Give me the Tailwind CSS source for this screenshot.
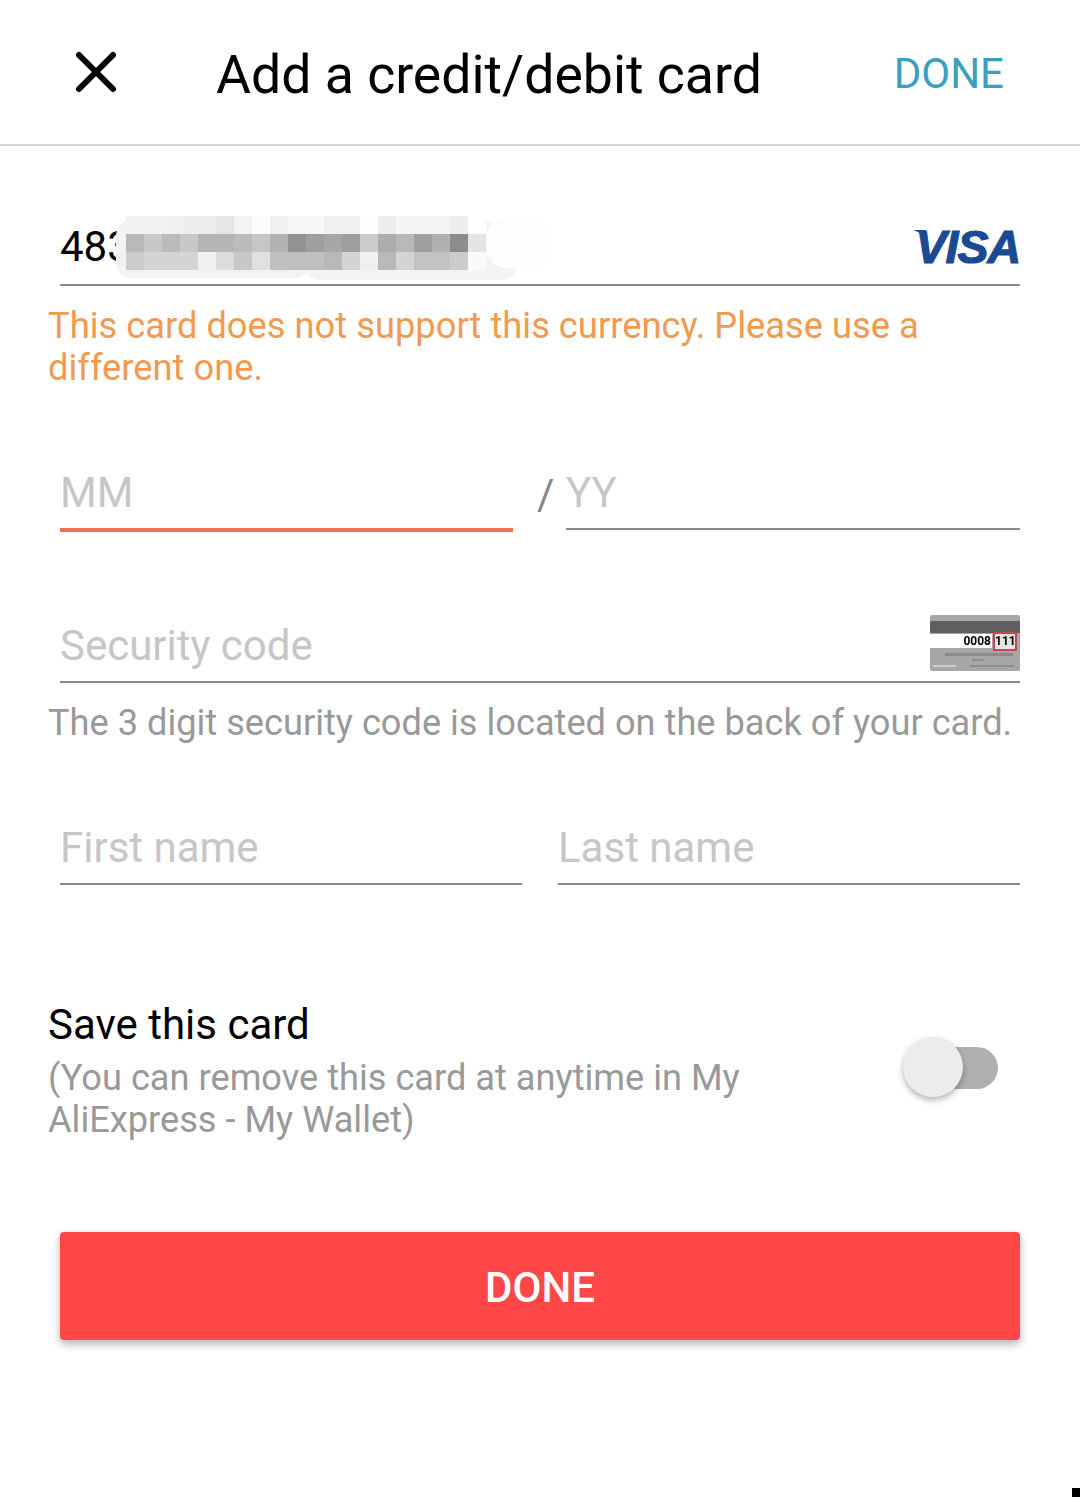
<!DOCTYPE html>
<html lang="en">
<head>
<meta charset="utf-8">
<script src="https://cdn.jsdelivr.net/npm/@tailwindcss/browser@4"></script>
</head>
<body class="bg-white">
<div class="relative w-[1080px] h-[1497px] overflow-hidden bg-white font-[Roboto,sans-serif]">
  <header class="flex items-center h-[146px] border-b-2 border-[#d4d4d4] pl-[72px] pr-[76px]">
    <svg class="w-[48px] h-[48px] shrink-0" viewBox="0 0 48 48" fill="none" stroke="#000" stroke-width="6" stroke-linecap="round"><path d="M7 7L41 41M41 7L7 41"/></svg>
    <h1 class="ml-[96px] pt-[5px] text-[53.6px] leading-[60px] text-black font-normal whitespace-nowrap">Add a credit/debit card</h1>
    <span class="ml-auto pt-[4px] text-[42px] leading-[50px] text-[#3aa0bd]">DONE</span>
  </header>

  <main class="px-[60px]">
    <div class="relative flex items-end justify-between h-[140px] border-b-2 border-[#888] pb-[12px]">
      <span class="text-[42px] leading-[50px] text-black">4832</span>
      <div class="relative">
        <svg class="absolute left-[-2px] top-[8px] w-[14px] h-[10px]" viewBox="0 0 14 10"><path d="M0 0H12L14 10C11 5 6 2 0 0Z" fill="#1a4a94"/></svg>
        <span class="block text-[46.5px] leading-[50px] font-bold italic text-[#1a4a94] tracking-[-1px] [-webkit-text-stroke:1.2px_#1a4a94] font-['Liberation_Sans',sans-serif]">VISA</span>
      </div>
    </div>
    <p class="-ml-3 mt-[19px] text-[36.3px] leading-[42px] text-[#f19a4f] whitespace-nowrap">This card does not support this currency. Please use a<br>different one.</p>

    <div class="flex items-end mt-[73px]">
      <div class="w-[453px] h-[70px] -mb-[2px] border-b-4 border-[#f26f50] text-[42px] leading-[62px] text-[#c6c6c6]">MM</div>
      <span class="w-[53px] h-[68px] pl-[24px] text-[42px] leading-[66px] text-[#888]">/</span>
      <div class="w-[454px] h-[68px] border-b-2 border-[#888] text-[42px] leading-[62px] text-[#c6c6c6]">YY</div>
    </div>

    <div class="flex items-end justify-between mt-[85px] h-[68px] border-b-2 border-[#888]">
      <span class="text-[42px] leading-[56px] mb-[7px] text-[#c6c6c6]">Security code</span>
      <div class="relative w-[90px] h-[56px] mb-[10px] rounded-[2px] bg-[#a6a6a6] overflow-hidden blur-[0.4px]">
        <div class="h-[12px] mt-[6px] bg-[#5e5e5e]"></div>
        <div class="absolute left-0 top-[19px] w-[62px] h-[14px] bg-white"></div>
        <div class="absolute left-0 top-[18px] w-[61px] h-[16px] text-right text-[12px] leading-[16px] font-bold text-black">0008</div>
        <div class="absolute left-[63px] top-[17px] w-[24px] h-[19px] border-2 border-[#d0434a] bg-[#e4e4e4] text-center text-[12px] leading-[15px] font-bold text-black">111</div>
        <div class="absolute left-[15px] top-[38px] w-[68px] h-[3px] bg-[#8a8a8a]"></div>
        <div class="absolute left-[42px] top-[44px] w-[12px] h-[2px] bg-[#8e8e8e]"></div>
        <div class="absolute left-[3px] top-[50px] w-[23px] h-[2px] bg-[#ccc]"></div>
        <div class="absolute left-[40px] top-[50px] w-[44px] h-[2px] bg-[#8e8e8e]"></div>
      </div>
    </div>
    <p class="-ml-3 mt-[19px] text-[36.2px] leading-[42px] text-[#999] whitespace-nowrap">The 3 digit security code is located on the back of your card.</p>

    <div class="flex justify-between mt-[73px]">
      <div class="w-[462px] h-[68px] border-b-2 border-[#888] text-[42px] leading-[62px] text-[#c6c6c6]">First name</div>
      <div class="w-[462px] h-[68px] border-b-2 border-[#888] text-[42px] leading-[62px] text-[#c6c6c6]">Last name</div>
    </div>

    <div class="flex items-center justify-between -ml-3 mr-[22px] mt-[115px]">
      <div>
        <div class="text-[42px] leading-[50px] text-black">Save this card</div>
        <p class="mt-[7px] text-[36.2px] leading-[42px] text-[#999]">(You can remove this card at anytime in My<br>AliExpress - My Wallet)</p>
      </div>
      <div class="relative w-[96px] h-[62px] mt-[-5px]">
        <div class="absolute left-[38px] top-[10px] w-[58px] h-[42px] rounded-r-full bg-[#b0b0b0]"></div>
        <div class="absolute left-[1px] top-0 w-[60px] h-[60px] rounded-full bg-[#ececec] shadow-[0_3px_6px_rgba(0,0,0,0.3)]"></div>
      </div>
    </div>

    <button class="block w-[960px] h-[108px] mt-[91px] pt-[2px] rounded-[4px] bg-[#ff4747] text-white text-[42px] font-medium shadow-[0_4px_8px_rgba(0,0,0,0.3)]">DONE</button>
  </main>

  <!-- privacy smudge laid over the card number -->
  <div class="absolute left-[116px] top-[216px] w-[440px] h-[64px]">
    <div class="absolute left-0 top-[4px] w-[195px] h-[58px] rounded-[16px] bg-[#f2f2f2]"></div>
    <div class="absolute left-[187px] top-[6px] w-[215px] h-[58px] rounded-b-[18px] bg-[#f3f3f3]"></div>
    <div class="absolute left-[370px] top-[2px] w-[66px] h-[50px] rounded-[20px] bg-[#fdfdfd]"></div>
    <div class="absolute left-[10px] top-0 grid grid-cols-[repeat(20,18px)] grid-rows-[repeat(3,18px)]">
      <i class="bg-[#f2f2f2]"></i><i class="bg-[#f2f2f2]"></i><i class="bg-[#f0f0f0]"></i><i class="bg-[#eeeeee]"></i><i class="bg-[#eeeeee]"></i><i class="bg-[#e6e6e6]"></i><i class="bg-[#f4f4f4]"></i><i class="bg-[#fbfbfb]"></i><i class="bg-[#f0f0f0]"></i><i class="bg-[#f6f6f6]"></i><i class="bg-[#f6f6f6]"></i><i class="bg-[#f0f0f0]"></i><i class="bg-[#f0f0f0]"></i><i class="bg-[#fefefe]"></i><i class="bg-[#eeeeee]"></i><i class="bg-[#f4f4f4]"></i><i class="bg-[#f4f4f4]"></i><i class="bg-[#f4f4f4]"></i><i class="bg-[#eeeeee]"></i><i class="bg-white"></i>
      <i class="bg-[#b8b8b8]"></i><i class="bg-[#c8c8c8]"></i><i class="bg-[#bbbbbb]"></i><i class="bg-[#c8c8c8]"></i><i class="bg-[#b5b5b5]"></i><i class="bg-[#b5b5b5]"></i><i class="bg-[#bcbcbc]"></i><i class="bg-[#c6c6c6]"></i><i class="bg-[#b2b2b2]"></i><i class="bg-[#939393]"></i><i class="bg-[#9e9e9e]"></i><i class="bg-[#a6a6a6]"></i><i class="bg-[#9e9e9e]"></i><i class="bg-[#cccccc]"></i><i class="bg-[#adadad]"></i><i class="bg-[#b8b8b8]"></i><i class="bg-[#9e9e9e]"></i><i class="bg-[#b0b0b0]"></i><i class="bg-[#8c8c8c]"></i><i class="bg-[#e4e4e4]"></i>
      <i class="bg-[#cccccc]"></i><i class="bg-[#d4d4d4]"></i><i class="bg-[#d4d4d4]"></i><i class="bg-[#d4d4d4]"></i><i class="bg-[#f0f0f0]"></i><i class="bg-[#dcdcdc]"></i><i class="bg-[#c8c8c8]"></i><i class="bg-[#e0e0e0]"></i><i class="bg-[#c0c0c0]"></i><i class="bg-[#bfbfbf]"></i><i class="bg-[#bfbfbf]"></i><i class="bg-[#b8b8b8]"></i><i class="bg-[#d4d4d4]"></i><i class="bg-[#f0f0f0]"></i><i class="bg-[#b8b8b8]"></i><i class="bg-[#d4d4d4]"></i><i class="bg-[#c2c2c2]"></i><i class="bg-[#c2c2c2]"></i><i class="bg-[#cccccc]"></i><i class="bg-[#fafafa]"></i>
    </div>
  </div>

  <div class="absolute right-0 bottom-0 w-[8px] h-[9px] bg-black"></div>
</div>
</body>
</html>
